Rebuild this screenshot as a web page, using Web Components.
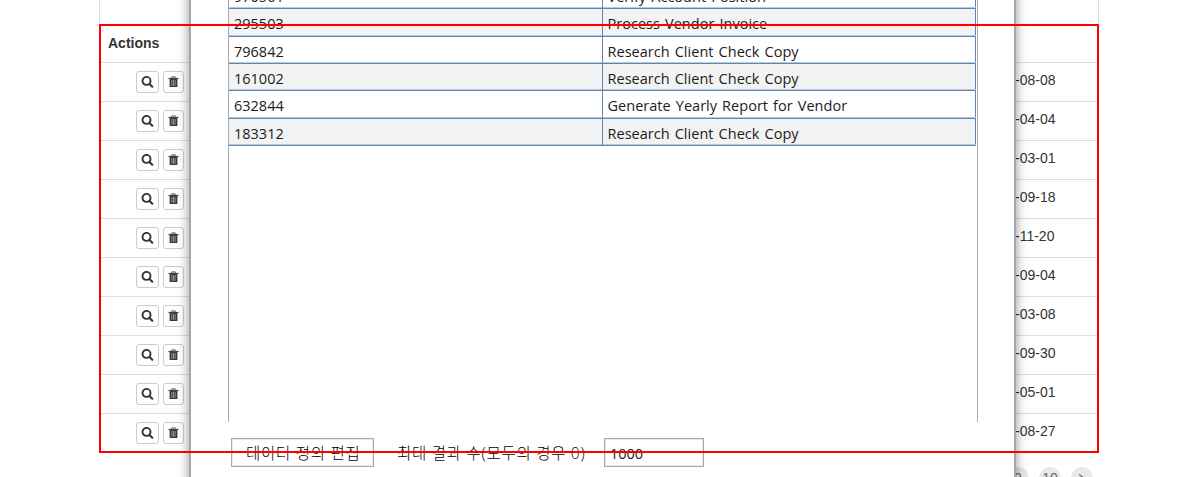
<!DOCTYPE html>
<html lang="ko"><head><meta charset="utf-8"><title>Data</title>
<style>html,body{margin:0;height:477px;overflow:hidden;background:#fff}</style></head><body>
<app-page></app-page>
<script>
const define=(name,html,init)=>customElements.define(name,class extends HTMLElement{
 connectedCallback(){if(this.shadowRoot)return;const t=document.createElement('template');t.innerHTML=html;
 this.attachShadow({mode:'open'}).append(t.content.cloneNode(true));if(init)init(this,this.shadowRoot)}});

define('icon-button',`<style>:host{display:flex;box-sizing:border-box;width:23px;height:22px;border:1px solid #ccc;border-radius:3px;background:#fff;align-items:center;justify-content:center}
:host([kind=trash]){width:21px}svg{display:block}</style><span></span>`,(h,r)=>{
 r.querySelector('span').innerHTML=h.getAttribute('kind')==='trash'
 ?'<svg width="11" height="12" viewBox="0 0 11 12"><path d="M.5 2.5h10" stroke="#444" stroke-width="1.2"/><path d="M3.8 2V.9h3.4V2" fill="none" stroke="#555"/><path d="M1.6 3h7.8v8H1.6z" fill="#3a3a3a"/><path d="M3.9 4v5.8M5.5 4v5.8M7.1 4v5.8" stroke="#aaa" stroke-width=".8"/></svg>'
 :'<svg width="13" height="12" viewBox="0 0 13 12"><circle cx="5.5" cy="4.9" r="4" fill="none" stroke="#333" stroke-width="1.9"/><path d="M8.5 7.9l2.8 2.8" stroke="#333" stroke-width="2.1" stroke-linecap="round"/></svg>'});

define('list-row',`<style>:host{display:flex;box-sizing:border-box;height:39px;border-top:1px solid #ddd;font:14px "Liberation Sans",sans-serif;color:#333;justify-content:space-between}
.a{display:flex;gap:4px;padding:8px 0 0 36px}.d{width:83px;line-height:16px;padding-top:9px}</style>
<div class="a"><icon-button kind="search"></icon-button><icon-button kind="trash"></icon-button></div><div class="d"><slot></slot></div>`);

define('record-list',`<style>:host{display:block;box-sizing:border-box;width:1000px;height:453px;margin-left:99px;border:solid #ddd;border-width:0 1px;font:bold 14px/16px "Liberation Sans",sans-serif;color:#333}
.h{height:62px;box-sizing:border-box;padding:35px 0 0 8px}</style><div class="h">Actions</div><div class="rows"></div>`,(h,r)=>{
 for(const d of ['08-08','04-04','03-01','09-18','11-20','09-04','03-08','09-30','05-01','08-27']){const e=document.createElement('list-row');e.textContent='-'+d;r.querySelector('.rows').append(e)}});

define('page-links',`<style>:host{display:flex;gap:10px;margin:14px 0 0 1007px;font:14px/22px "Liberation Sans",sans-serif;color:#666}
span{width:22px;height:22px;border-radius:50%;background:#e9e9e9;text-align:center}svg{display:block;margin:7px auto 0}</style>
<span>9</span><span>10</span><span><svg width="8" height="8" viewBox="0 0 8 8"><path d="M1 .5l5 3.5-5 3.5" fill="none" stroke="#777" stroke-width="1.3"/></svg></span>`);

define('data-row',`<style>:host{display:grid;grid-template-columns:373px 374px;box-sizing:border-box;height:var(--h,27px);width:747px;background:var(--bg,#fff);border-bottom:1px solid #5f87b0;box-shadow:inset 0 -1px #b9c9dc,inset -1px 0 #5f87b0;font:400 14.5px/20px "Open Sans","Noto Sans CJK KR",sans-serif;color:#1c1c1c}
div{padding:var(--pt,5px) 0 0 5px;white-space:nowrap;box-sizing:border-box}
div+div{padding-left:4.5px;border-left:1px solid #5f87b0;letter-spacing:.02px;word-spacing:1.3px}</style><div><slot name="id"></slot></div><div><slot></slot></div>`);

define('data-grid',`<style>:host{display:block;box-sizing:border-box;width:750px;height:422px;border:solid #a9a9a9;border-width:0 1px;overflow:hidden}
.v{margin-top:-19px}</style><div class="v"></div>`,(h,r)=>{
 [['970561','Verify Account Position',28],['295503','Process Vendor Invoice',28],['796842','Research Client Check Copy',27],['161002','Research Client Check Copy',27],['632844','Generate Yearly Report for Vendor',28],['183312','Research Client Check Copy',27]].forEach(([id,t,ht],i)=>{
 const e=document.createElement('data-row');e.style.setProperty('--h',ht+'px');if(i%2)e.style.setProperty('--bg','#f3f3f3');if(i<2)e.style.setProperty('--pt',i?'5px':'6px');
 const s=document.createElement('span');s.slot='id';s.textContent=id;
 const n=document.createElement('span');n.textContent=t;e.append(s,n);r.querySelector('.v').append(e)})});

define('tool-bar',`<style>:host{display:flex;margin:16px 0 0 3px;font:300 15.5px/29px "Open Sans","Noto Sans CJK KR",sans-serif;color:#000;white-space:nowrap}
div{box-sizing:border-box;height:29px}.b{width:143px;border:1px solid #aaa;box-shadow:inset 0 0 0 1px #e8e8e8;padding-left:14px;letter-spacing:.75px}
.l{width:230px;padding-left:23px;letter-spacing:.73px;line-height:31px}.i{width:100px;border:1px solid #aaa;box-shadow:inset 0 0 0 1px #e8e8e8;padding-left:5px;font-size:14.5px;font-weight:400;color:#1c1c1c}</style>
<div class="b">데이터 정의 편집</div><div class="l">최대 결과 수(모두의 경우 0)</div><div class="i">1000</div>`);

define('modal-panel',`<style>:host{display:block;box-sizing:border-box;position:absolute;left:189px;top:-10px;width:827px;height:510px;padding:10px 0 0 37px;background:#fff;border:2px solid #a5a5ab;box-shadow:0 0 11px rgba(0,0,0,.42)}
.in{margin-top:-2px}</style><div class="in"><slot></slot></div>`);

define('red-frame',`<style>:host{display:block;position:absolute;box-sizing:border-box;left:99px;top:24px;width:1000px;height:429px;border:2px solid #f00}</style>`);

define('app-page',`<style>:host{display:block;position:relative;width:1198px;height:477px;overflow:hidden;background:#fff}</style>
<record-list></record-list><page-links></page-links><modal-panel><data-grid></data-grid><tool-bar></tool-bar></modal-panel><red-frame></red-frame>`);
</script></body></html>
